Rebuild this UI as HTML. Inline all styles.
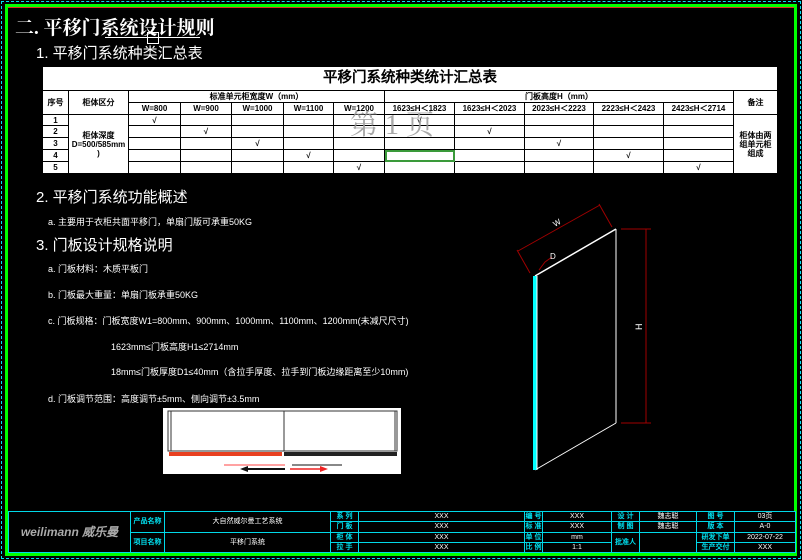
<!DOCTYPE html>
<html><head><meta charset="utf-8"><style>
*{margin:0;padding:0;box-sizing:border-box}
body{width:802px;height:560px;background:#000;position:relative;overflow:hidden;font-family:"Liberation Serif","Noto Serif CJK SC","WenQuanYi Zen Hei",serif;color:#fff}
.a{position:absolute;white-space:nowrap}
.h1{font-size:19px;font-weight:bold;font-family:"Liberation Serif","Noto Serif CJK SC",serif}
.h2{font-size:15px;font-family:"Liberation Sans","WenQuanYi Zen Hei",sans-serif}
.t{font-size:9px;font-family:"Liberation Sans","WenQuanYi Zen Hei",sans-serif}
table{border-collapse:collapse;position:absolute;background:#fff;color:#000;font-family:"Liberation Sans","WenQuanYi Zen Hei",sans-serif;font-size:8px;font-weight:bold;table-layout:fixed}
td{border:1px solid #000;text-align:center;padding:0;line-height:9px;overflow:hidden}
.ft td{border:1px solid #00d8e8;color:#fff;font-weight:normal;font-size:7px}
.ft{background:#000}
.c{color:#00e0f0!important;font-weight:bold!important}
</style></head><body>
<div class="a" style="left:1px;top:1px;width:800px;height:558px;border:1px dashed #00e0f0"></div>
<div class="a" style="left:5px;top:4px;width:792px;height:552px;border:3px solid #00ff00"></div>
<div class="a" style="left:8px;top:7px;width:786px;height:500px;border-top:1px solid #e03020"></div>

<div class="a h1" style="left:15px;top:13px">二. 平移门系统设计规则</div>
<div class="a" style="left:105px;top:37px;width:95px;border-top:1px solid #fff"></div>
<div class="a" style="left:147px;top:32px;width:12px;height:12px;border:1px solid #fff"></div>
<div class="a h2" style="left:36px;top:42px">1. 平移门系统种类汇总表</div>

<table style="left:42px;top:66px;width:735px;height:107px">
<colgroup><col style="width:26px"><col style="width:60px"><col style="width:52px"><col style="width:51px"><col style="width:52px"><col style="width:50px"><col style="width:51px"><col style="width:70px"><col style="width:70px"><col style="width:69px"><col style="width:70px"><col style="width:70px"><col style="width:44px"></colgroup>
<tr style="height:24px"><td colspan="13" style="font-size:14.5px;border-bottom:1px solid #000">平移门系统种类统计汇总表</td></tr>
<tr style="height:12px"><td rowspan="2">序号</td><td rowspan="2">柜体区分</td><td colspan="5">标准单元柜宽度W（mm）</td><td colspan="5">门板高度H（mm）</td><td rowspan="2">备注</td></tr>
<tr style="height:12px"><td>W=800</td><td>W=900</td><td>W=1000</td><td>W=1100</td><td>W=1200</td><td>1623≤H＜1823</td><td>1623≤H＜2023</td><td>2023≤H＜2223</td><td>2223≤H＜2423</td><td>2423≤H＜2714</td></tr>
<tr style="height:11px"><td>1</td><td rowspan="5">柜体深度<br>D=500/585mm<br>)</td><td>√</td><td></td><td></td><td></td><td></td><td>√</td><td></td><td></td><td></td><td></td><td rowspan="5">柜体由两<br>组单元柜<br>组成</td></tr>
<tr style="height:12px"><td>2</td><td></td><td>√</td><td></td><td></td><td></td><td></td><td>√</td><td></td><td></td><td></td></tr>
<tr style="height:12px"><td>3</td><td></td><td></td><td>√</td><td></td><td></td><td></td><td></td><td>√</td><td></td><td></td></tr>
<tr style="height:12px"><td>4</td><td></td><td></td><td></td><td>√</td><td></td><td style="outline:2px solid #3a9a3a;outline-offset:-2px"></td><td></td><td></td><td>√</td><td></td></tr>
<tr style="height:12px"><td>5</td><td></td><td></td><td></td><td></td><td>√</td><td></td><td></td><td></td><td></td><td>√</td></tr>
</table>
<div class="a" style="left:350px;top:103px;font-size:28px;color:#999;font-family:'Liberation Serif','Noto Serif CJK SC',serif;opacity:.85">第 1 页</div>

<div class="a h2" style="left:36px;top:186px">2. 平移门系统功能概述</div>
<div class="a t" style="left:48px;top:215px">a. 主要用于衣柜共面平移门，单扇门版可承重50KG</div>
<div class="a h2" style="left:36px;top:234px">3. 门板设计规格说明</div>
<div class="a t" style="left:48px;top:262px">a. 门板材料：木质平板门</div>
<div class="a t" style="left:48px;top:288px">b. 门板最大重量：单扇门板承重50KG</div>
<div class="a t" style="left:48px;top:314px">c. 门板规格：门板宽度W1=800mm、900mm、1000mm、1100mm、1200mm(未减尺尺寸)</div>
<div class="a t" style="left:111px;top:340px">1623mm≤门板高度H1≤2714mm</div>
<div class="a t" style="left:111px;top:365px">18mm≤门板厚度D1≤40mm（含拉手厚度、拉手到门板边缘距离至少10mm)</div>
<div class="a t" style="left:48px;top:392px">d. 门板调节范围：高度调节±5mm、侧向调节±3.5mm</div>

<svg class="a" style="left:0;top:0" width="802" height="560">
<rect x="163" y="408" width="238" height="66" fill="#fff"/>
<rect x="168" y="411" width="116" height="40" fill="none" stroke="#333" stroke-width="1"/>
<rect x="284" y="411" width="113" height="40" fill="none" stroke="#333" stroke-width="1"/>
<line x1="171" y1="411" x2="171" y2="451" stroke="#333"/>
<line x1="395" y1="411" x2="395" y2="451" stroke="#333"/>
<rect x="169" y="452" width="113" height="4" fill="#e84020"/>
<rect x="284" y="452" width="113" height="4" fill="#222"/>
<line x1="224" y1="465" x2="285" y2="465" stroke="#f44" />
<line x1="292" y1="465" x2="342" y2="465" stroke="#111"/>
<line x1="243" y1="469" x2="285" y2="469" stroke="#111" stroke-width="2"/>
<line x1="290" y1="469" x2="325" y2="469" stroke="#e22" stroke-width="1.5"/>
<polygon points="240,469 248,466 248,472" fill="#111"/>
<polygon points="328,469 320,466 320,472" fill="#e22"/>
<line x1="535" y1="276" x2="616" y2="229" stroke="#fff" stroke-width="1.5"/>
<line x1="616" y1="229" x2="616" y2="423" stroke="#fff"/>
<line x1="616" y1="423" x2="535" y2="470" stroke="#fff"/>
<rect x="533" y="276" width="4" height="194" fill="#00ffff"/>
<line x1="537" y1="276" x2="537" y2="470" stroke="#fff"/>
<g stroke="#a00000" fill="none">
<line x1="621" y1="229" x2="651" y2="229"/>
<line x1="621" y1="423" x2="651" y2="423"/>
<line x1="646" y1="229" x2="646" y2="423"/>
<line x1="518" y1="251" x2="600" y2="205"/>
<line x1="517" y1="250" x2="530" y2="273"/>
<line x1="599" y1="204" x2="612" y2="227"/>
<path d="M539 270 L545 262 L552 257"/>
</g>
<text x="642" y="330" fill="#fff" font-size="9" transform="rotate(-90 642 330)" font-family="Liberation Sans">H</text>
<text x="555" y="227" fill="#fff" font-size="8" font-family="Liberation Sans" transform="rotate(-30 555 227)">W</text>
<text x="550" y="259" fill="#fff" font-size="8" font-family="Liberation Sans">D</text>
</svg>

<table class="ft" style="left:8px;top:511px;width:787px;height:42px">
<colgroup><col style="width:122px"><col style="width:34px"><col style="width:166px"><col style="width:28px"><col style="width:166px"><col style="width:18px"><col style="width:69px"><col style="width:28px"><col style="width:57px"><col style="width:38px"><col style="width:61px"></colgroup>
<tr><td rowspan="4" style="font-size:12px;font-weight:bold;color:#aaa;font-style:italic">weilimann 威乐曼</td><td rowspan="2" class="c">产品名称</td><td rowspan="2">大自然威尔曼工艺系统</td><td class="c">系 列</td><td>XXX</td><td class="c">编 号</td><td>XXX</td><td class="c">设 计</td><td>魏志聪</td><td class="c">图 号</td><td>03页</td></tr>
<tr><td class="c">门 板</td><td>XXX</td><td class="c">标 准</td><td>XXX</td><td class="c">制 图</td><td>魏志聪</td><td class="c">版 本</td><td>A-0</td></tr>
<tr><td rowspan="2" class="c">项目名称</td><td rowspan="2">平移门系统</td><td class="c">柜 体</td><td>XXX</td><td class="c">单 位</td><td>mm</td><td rowspan="2" class="c">批准人</td><td rowspan="2"></td><td class="c">研发下单</td><td>2022-07-22</td></tr>
<tr><td class="c">拉 手</td><td>XXX</td><td class="c">比 例</td><td>1:1</td><td class="c">生产交付</td><td>XXX</td></tr>
</table>
</body></html>
